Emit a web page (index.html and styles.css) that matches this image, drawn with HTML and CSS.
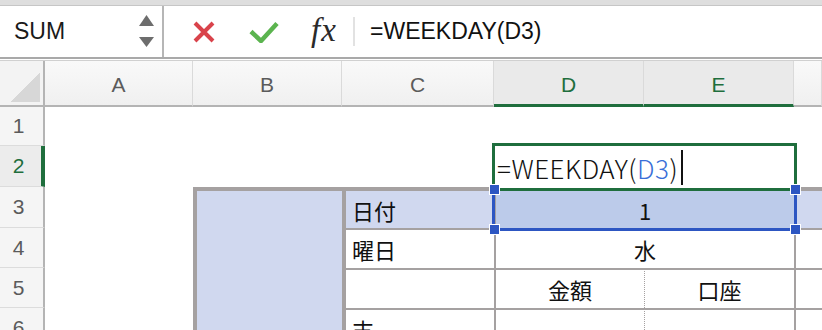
FILE: index.html
```html
<!DOCTYPE html>
<html lang="ja">
<head>
    <meta charset="UTF-8">
    <meta name="viewport" content="width=device-width, initial-scale=1.0">
    <title>WEEKDAY</title>
    <link rel="stylesheet" href="styles.css">
</head>
<body>
    <div class="chrome-top"></div>

    <div class="formula-bar">
        <div class="name-box">
            <span>SUM</span>
            <svg class="spinner" width="16" height="33" viewBox="0 0 16 33">
                <path d="M7.5 0 L15 11 L0 11 Z"/>
                <path d="M0 22 L15 22 L7.5 32 Z"/>
            </svg>
        </div>
        <div class="fb-tools">
            <svg class="icon-cancel" width="22" height="22" viewBox="0 0 22 22">
                <path d="M2 2 L20 20 M20 2 L2 20"/>
            </svg>
            <svg class="icon-enter" width="30" height="22" viewBox="0 0 30 22">
                <path d="M2 10.5 L12 20 L28 2.5"/>
            </svg>
            <span class="icon-fx">fx</span>
            <span class="fb-sep"></span>
        </div>
        <div class="fb-input">=WEEKDAY(D3)</div>
    </div>

    <div class="sheet">
        <!-- column headers -->
        <div class="corner"><span class="corner-tri"></span></div>
        <div class="col-head">A</div>
        <div class="col-head">B</div>
        <div class="col-head">C</div>
        <div class="col-head active">D</div>
        <div class="col-head active">E</div>
        <div class="col-head"></div>

        <!-- row 1 -->
        <div class="row-head">1</div>
        <div></div><div></div><div></div><div></div><div></div><div></div>

        <!-- row 2 -->
        <div class="row-head active">2</div>
        <div></div><div></div><div></div><div></div><div></div><div></div>

        <!-- row 3 -->
        <div class="row-head">3</div>
        <div></div>
        <div class="cell t-top bl-thick fill span-rows"></div>
        <div class="cell t-top bl-thick fill">日付</div>
        <div class="cell t-top bl selected center span-cols">1</div>
        <div class="cell t-top bl fill"></div>

        <!-- row 4 -->
        <div class="row-head">4</div>
        <div></div>
        <div class="cell t bl-thick">曜日</div>
        <div class="cell t bl center span-cols">水</div>
        <div class="cell t bl"></div>

        <!-- row 5 -->
        <div class="row-head">5</div>
        <div></div>
        <div class="cell t bl-thick"></div>
        <div class="cell t bl center">金額</div>
        <div class="cell t bl-dot center">口座</div>
        <div class="cell t bl"></div>

        <!-- row 6 -->
        <div class="row-head">6</div>
        <div></div>
        <div class="cell t bl-thick">支</div>
        <div class="cell t bl"></div>
        <div class="cell t bl-dot"></div>
        <div class="cell t bl"></div>

        <!-- selection + in-cell editor -->
        <div class="selection"></div>
        <div class="edit-box">
            <span>=WEEKDAY(</span><span class="ref">D3</span><span>)</span><span class="caret"></span>
        </div>
        <span class="handle h-tl"></span>
        <span class="handle h-tr"></span>
        <span class="handle h-bl"></span>
        <span class="handle h-br"></span>
    </div>
</body>
</html>
```

FILE: styles.css
```css
html, body {
    height: 330px;
    overflow: hidden;
}
body {
    margin: 0;
    font-family: "Liberation Sans", Arial, sans-serif;
    background: #fff;
    color: #111;
}

.chrome-top {
    height: 5px;
    background: #dedede;
    border-bottom: 1px solid #c6c6c6;
}

/* formula bar */
.formula-bar {
    display: flex;
    height: 51px;
    border-bottom: 2px solid #a9a9a9;
}
.name-box {
    width: 164px;
    box-sizing: border-box;
    border-right: 2px solid #b6b6b6;
    display: flex;
    align-items: center;
    justify-content: space-between;
    padding: 0 7px 0 14px;
    font-size: 23px;
    color: #1a1a1a;
}
.spinner path {
    fill: #6d6d6d;
}
.fb-tools {
    display: flex;
    align-items: center;
    padding-left: 29px;
}
.icon-cancel {
    margin-right: 34px;
}
.icon-cancel path {
    stroke: #d9434b;
    stroke-width: 4;
    fill: none;
}
.icon-enter {
    margin-right: 32px;
}
.icon-enter path {
    stroke: #5bb44f;
    stroke-width: 4.5;
    fill: none;
}
.icon-fx {
    width: 30px;
    font-family: "Liberation Serif", serif;
    font-style: italic;
    font-size: 33px;
    letter-spacing: 1px;
    color: #2a2a2a;
    margin-top: -3px;
}
.fb-sep {
    width: 2px;
    height: 29px;
    background: #e2e2e2;
    margin: 0 15px 0 12px;
}
.fb-input {
    display: flex;
    align-items: center;
    font-size: 23px;
    color: #111;
}

/* sheet */
.sheet {
    position: relative;
    display: grid;
    grid-template-columns: 45px 148px 149px 152px 150px 150px 28px;
    grid-template-rows: 46px 39px 41px 41px 40px 40px 40px;
    margin-top: 1px;
    border-top: 1px solid #d0d0d0;
}

.corner {
    background: #f3f3f3;
    border-right: 2px solid #b4b4b4;
    border-bottom: 2px solid #b4b4b4;
    display: flex;
    align-items: flex-end;
    justify-content: flex-end;
    padding: 0 3px 3px 0;
}
.corner-tri {
    width: 30px;
    height: 30px;
    background: linear-gradient(to bottom right, transparent 50%, #d7d7d7 50%);
}

.col-head {
    background: linear-gradient(#f9f9f9, #f0f0f0);
    border-right: 1px solid #dadada;
    border-bottom: 2px solid #b4b4b4;
    display: flex;
    align-items: center;
    justify-content: center;
    padding-top: 4px;
    font-size: 21px;
    color: #5b5b5b;
}
.col-head.active {
    background: #eaeaea;
    color: #1f6e3d;
    border-bottom: 3px solid #1f6e3d;
    padding-top: 5px;
}

.row-head {
    background: #f5f5f5;
    border-right: 2px solid #b4b4b4;
    border-bottom: 1px solid #dcdcdc;
    display: flex;
    align-items: center;
    justify-content: center;
    padding-right: 6px;
    font-size: 21px;
    color: #5b5b5b;
}
.row-head.active {
    background: #ececec;
    color: #1f6e3d;
    border-right: 4px solid #1f6e3d;
    padding-right: 4px;
}

/* table cells */
.cell {
    display: flex;
    align-items: center;
    padding-left: 6px;
    font-family: "Noto Sans CJK JP", sans-serif;
    font-size: 22px;
    color: #111;
}
.cell.center {
    justify-content: center;
    padding-left: 0;
}
.t {
    border-top: 2px solid #a5a1a1;
}
.t-top {
    border-top: 4px solid #a5a1a1;
}
.bl {
    border-left: 2px solid #a5a1a1;
}
.bl-thick {
    border-left: 4px solid #a5a1a1;
}
.bl-dot {
    border-left: 1px dotted #a5a1a1;
}
.fill {
    background: #d0d8ef;
}
.selected {
    background: #bccbea;
}
.span-rows {
    grid-row: span 4;
}
.span-cols {
    grid-column: span 2;
}

/* selection overlay */
.selection {
    position: absolute;
    left: 492px;
    top: 127px;
    width: 305px;
    height: 43px;
    box-sizing: border-box;
    border: 3px solid #2d56c2;
}
.edit-box {
    position: absolute;
    left: 492px;
    top: 82px;
    width: 305px;
    height: 48px;
    box-sizing: border-box;
    border: 3px solid #1f6e3d;
    background: #fff;
    display: flex;
    align-items: center;
    padding-left: 2px;
    font-family: "Noto Sans CJK JP", sans-serif;
    font-size: 26px;
    font-weight: 300;
    letter-spacing: 0.5px;
    color: #111;
}
.edit-box .ref {
    color: #3a6fd8;
}
.caret {
    width: 2px;
    height: 35px;
    background: #111;
    margin-left: 3px;
}
.handle {
    position: absolute;
    width: 9px;
    height: 9px;
    background: #2d56c2;
    border: 1px solid #fff;
}
.h-tl { left: 489px; top: 123px; }
.h-tr { left: 790px; top: 123px; }
.h-bl { left: 489px; top: 163px; }
.h-br { left: 790px; top: 163px; }
```
